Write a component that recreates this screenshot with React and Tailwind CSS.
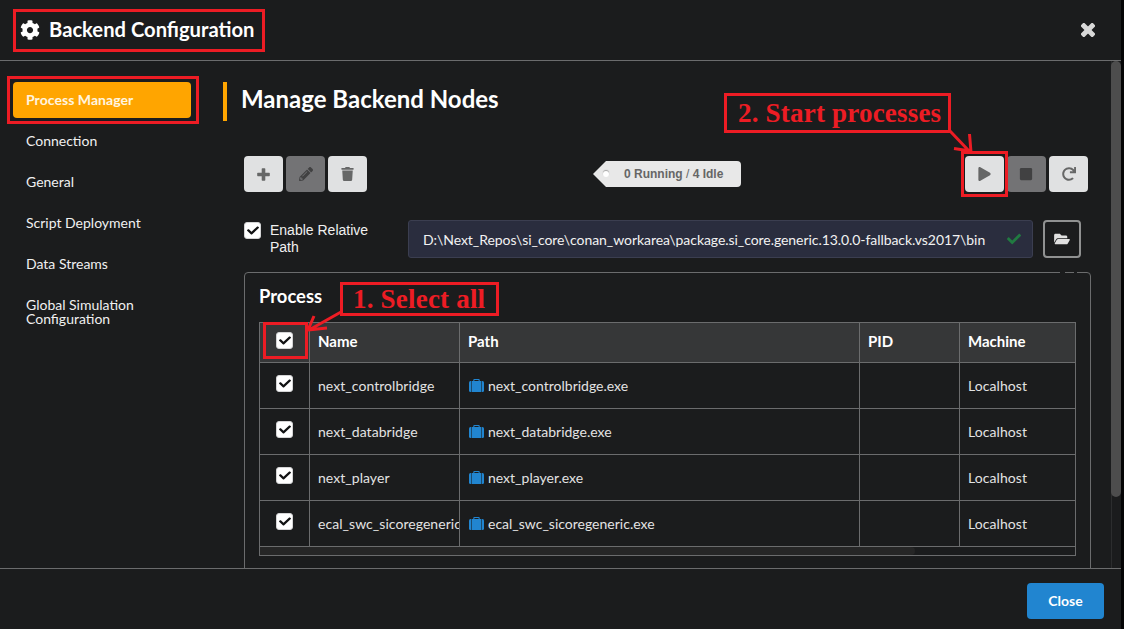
import React from "react";
import {
  FaCog,
  FaPencilAlt,
  FaTrash,
  FaPlay,
  FaStop,
  FaRedo,
  FaFolderOpen,
  FaCheck,
} from "react-icons/fa";

const NAV = [
  "Connection",
  "General",
  "Script Deployment",
  "Data Streams",
  "Global Simulation Configuration",
];

const ROWS = ["next_controlbridge", "next_databridge", "next_player", "ecal_swc_sicoregeneric"];

const COLS = "grid grid-cols-[50px_150px_400px_100px_115px]";

function CloseIcon() {
  return (
    <svg className="mr-px h-[14px] w-[14px] text-[#d8d8d8]" viewBox="0 0 14 14" fill="currentColor">
      <rect x="-1.400" y="4.500" width="16.800" height="5" rx="1.300" transform="rotate(45 7 7)" />
      <rect x="-1.400" y="4.500" width="16.800" height="5" rx="1.300" transform="rotate(-45 7 7)" />
    </svg>
  );
}

function PlusIcon() {
  return (
    <svg className="h-[13px] w-[13px]" viewBox="0 0 13 13" fill="currentColor">
      <rect x="0.200" y="4.700" width="12.600" height="3.600" rx="0.700" />
      <rect x="4.700" y="0.200" width="3.600" height="12.600" rx="0.700" />
    </svg>
  );
}

function SuitcaseIcon() {
  return (
    <svg className="mt-[3px] mr-[4px] h-[13px] w-[15px]" viewBox="0 0 15 13" fill="#2185d0">
      <path d="M0 3.500Q0 2 1.500 2H2.200V13H1.500Q0 13 0 11.500Z" />
      <path d="M2.700 2H4.300V1Q4.300 0 5.300 0H9.700Q10.700 0 10.700 1V2H12.300V13H2.700ZM5.400 1.100V2H9.600V1.100Z" />
      <path d="M12.800 2H13.500Q15 2 15 3.500V11.500Q15 13 13.500 13H12.800Z" />
    </svg>
  );
}

function Checkbox() {
  return (
    <span className="flex h-[17px] w-[17px] shrink-0 items-center justify-center rounded-[3px] border border-[#d4d4d5] bg-white">
      <FaCheck className="mb-px h-[11px] w-[12px] text-[#111213]" preserveAspectRatio="none" />
    </span>
  );
}

function ToolButton({ disabled, children }) {
  return (
    <button
      className={
        disabled
          ? "flex h-9 w-[39px] items-center justify-center rounded bg-[#737375] text-[#414142]"
          : "flex h-9 w-[39px] items-center justify-center rounded bg-[#e0e1e2] text-[#666767]"
      }
    >
      {children}
    </button>
  );
}

function Header() {
  return (
    <header className="flex h-[61px] shrink-0 items-center justify-between border-b border-[#6b6c6d] pr-[25px] pl-5">
      <h1 className="flex items-center text-[20.200px] font-bold text-white">
        <FaCog className="mr-[9px] h-5 w-5" />
        <span className="-mt-[3px] leading-6 whitespace-nowrap">Backend Configuration</span>
      </h1>
      <CloseIcon />
    </header>
  );
}

function Sidebar() {
  return (
    <nav className="ml-[13px] flex w-[178px] shrink-0 flex-col gap-[5px] pt-[21px] text-[14px] leading-[14px] text-[#f0f0f0]">
      <a className="rounded bg-[#ffa500] px-[13px] py-[11px] font-bold tracking-[0.050px] text-[#fff5e0]">
        Process Manager
      </a>
      {NAV.map((item) => (
        <a key={item} className="px-[13px] py-[11px]">
          {item}
        </a>
      ))}
    </nav>
  );
}

function ProcessTable() {
  return (
    <div className="flex w-[817px] flex-col border border-[#6b6c6d] text-[14px]">
      <div className={COLS + " h-[40px] border-b border-[#6b6c6d] bg-[#363738] text-[15px] leading-5 font-bold text-white"}>
        <div className="flex justify-center border-r border-[#6b6c6d] pt-[9px]">
          <Checkbox />
        </div>
        <div className="border-r border-[#6b6c6d] pt-[8px] pl-2">Name</div>
        <div className="border-r border-[#6b6c6d] pt-[8px] pl-2">Path</div>
        <div className="border-r border-[#6b6c6d] pt-[8px] pl-2">PID</div>
        <div className="pt-[8px] pl-2">Machine</div>
      </div>
      {ROWS.map((name) => (
        <div key={name} className={COLS + " h-[46px] border-b border-[#6b6c6d] leading-5 text-[#e3e3e3]"}>
          <div className="flex justify-center border-r border-[#6b6c6d] pt-[12px]">
            <Checkbox />
          </div>
          <div className="overflow-hidden border-r border-[#6b6c6d] pt-[13px] pl-2 tracking-[0.050px] whitespace-nowrap">
            {name}
          </div>
          <div className="flex border-r border-[#6b6c6d] pt-[13px] pl-[9px]">
            <SuitcaseIcon />
            {name}.exe
          </div>
          <div className="border-r border-[#6b6c6d]" />
          <div className="pt-[13px] pl-2 tracking-[0.080px]">Localhost</div>
        </div>
      ))}
      <div className="h-2">
        <div className="h-2 w-[655px] rounded-r bg-[#262626]" />
      </div>
    </div>
  );
}

function Annotations() {
  return (
    <div className="pointer-events-none absolute inset-0 font-['Liberation_Serif',serif] text-[27px] leading-[30px] font-bold tracking-[0.200px] whitespace-nowrap text-[#ed1c24]">
      <div className="absolute top-[9px] left-[13px] h-[43px] w-[252px] border-3 border-[#ed1c24]" />
      <div className="absolute top-[76px] left-[7px] h-[48px] w-[192px] border-3 border-[#ed1c24]" />
      <div className="absolute top-[93px] left-[724px] h-[40px] w-[227px] border-3 border-[#ed1c24] pt-[2px] pl-[11px]">
        2. Start processes
      </div>
      <div className="absolute top-[282px] left-[340px] h-[34px] w-[159px] border-3 border-[#ed1c24] pl-[10px] leading-[29px]">
        1. Select all
      </div>
      <div className="absolute top-[151px] left-[961px] h-[46px] w-[47px] border-3 border-[#ed1c24]" />
      <div className="absolute top-[322px] left-[263px] h-[37px] w-[45px] border-3 border-[#ed1c24]" />
      <svg className="absolute inset-0" width="1124" height="629" fill="none" stroke="#ed1c24" strokeWidth="3">
        <path d="M950 131L970 152M969.500 134L971 152M954 148.500L970 151" />
        <path d="M341 312L309 330M314 316L308 330M308 330L327 328" />
      </svg>
    </div>
  );
}

export default function App() {
  return (
    <div className="relative h-[629px] w-[1124px] overflow-hidden bg-[#050506] font-['Lato',sans-serif]">
      <div className="flex h-full w-[1121px] flex-col bg-[#1b1c1d]">
        <Header />
        <div className="flex h-[507px] shrink-0">
          <Sidebar />
          <main className="ml-8 flex w-[868px] flex-col overflow-hidden pt-[21px]">
            <h2 className="h-[39px] shrink-0 border-l-4 border-[#ffa500] pl-[14px] text-[24px] leading-[34px] font-bold text-white">
              Manage Backend Nodes
            </h2>
            <div className="mt-[35px] ml-[21px] flex h-9 w-[844px] shrink-0 items-center">
              <div className="flex gap-[3px]">
                <ToolButton>
                  <PlusIcon />
                </ToolButton>
                <ToolButton disabled>
                  <FaPencilAlt className="h-[14px] w-[14px]" />
                </ToolButton>
                <ToolButton>
                  <FaTrash className="h-[14px] w-[13px]" />
                </ToolButton>
              </div>
              <div className="ml-[226px] flex h-[26px] items-center">
                <svg className="h-[26px] w-[13px]" viewBox="0 0 13 26">
                  <path d="M13 0L0 13L13 26Z" fill="#e8e8e8" />
                </svg>
                <div className="relative flex h-[26px] w-[135px] items-center rounded-r bg-[#e8e8e8] pl-[18px] font-['Liberation_Sans',sans-serif] text-[12px] font-bold whitespace-nowrap text-[#666]">
                  <span className="absolute top-[10px] left-[-3px] h-[6px] w-[6px] rounded-full bg-white shadow-[0_-1px_1px_0_rgba(0,0,0,0.3)]" />
                  0 Running&nbsp;<span className="font-normal">/</span>&nbsp;4 Idle
                </div>
              </div>
              <div className="ml-auto flex gap-[3px]">
                <ToolButton>
                  <FaPlay className="h-[14px] w-[13px]" />
                </ToolButton>
                <ToolButton disabled>
                  <FaStop className="mr-px h-[14px] w-[14px]" />
                </ToolButton>
                <ToolButton>
                  <FaRedo className="h-[14px] w-[14px]" />
                </ToolButton>
              </div>
            </div>
            <div className="mt-[28px] ml-[21px] flex h-[38px] shrink-0">
              <div className="flex w-[164px] pt-[2px]">
                <Checkbox />
                <span className="ml-[9px] w-[110px] font-['Liberation_Sans',sans-serif] text-[14px] leading-[17px] text-[#f0f0f0]">
                  Enable Relative Path
                </span>
              </div>
              <div className="flex h-[38px] w-[625px] items-center justify-between rounded-[3px] border border-[#3b3e50] bg-[#2a2d3e] pr-[11px] pl-[14px] text-[14px] text-[#f2f2f2]">
                <span className="pt-px tracking-[-0.060px] whitespace-nowrap">
                  D:\Next_Repos\si_core\conan_workarea\package.si_core.generic.13.0.0-fallback.vs2017\bin
                </span>
                <FaCheck className="h-[14px] w-[14px] text-[#217a41]" />
              </div>
              <button className="ml-[10px] flex h-[38px] w-[38px] items-center justify-center rounded border-2 border-[#909191] text-[#e0e0e0]">
                <FaFolderOpen className="h-[14px] w-4" />
              </button>
            </div>
            <section className="relative mt-[14px] ml-[21px] h-[310px] w-[847px] shrink-0 rounded border border-[#6b6c6d] pl-[14px]">
              <span className="absolute top-[-1px] left-[815px] h-px w-[5px] bg-[#1b1c1d]" />
              <span className="absolute top-[-1px] left-[829px] h-px w-[3px] bg-[#1b1c1d]" />
              <h3 className="h-[49px] pt-[11px] text-[18.400px] leading-6 font-bold text-white">Process</h3>
              <ProcessTable />
            </section>
          </main>
          <div className="ml-auto w-[10px] border-l border-[#2c2d2e]">
            <div className="-ml-px h-[436px] w-[10px] rounded-full bg-[#4d4d4d]" />
          </div>
        </div>
        <footer className="flex h-[61px] shrink-0 justify-end border-t border-[#6b6c6d] pt-[14px] pr-[17px]">
          <button className="h-9 w-[77px] rounded bg-[#2185d0] pb-[2px] text-[14px] font-bold text-white">Close</button>
        </footer>
      </div>
      <Annotations />
    </div>
  );
}
